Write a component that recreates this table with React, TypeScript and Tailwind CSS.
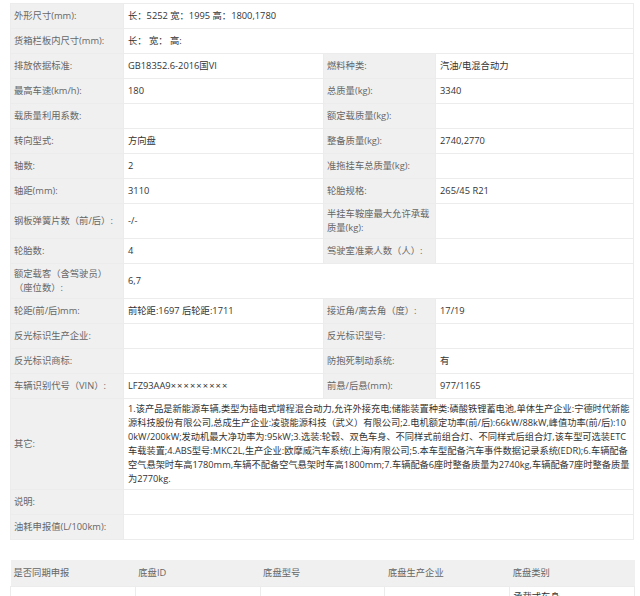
import React from "react";

type Row = {
  l1: React.ReactNode;
  v1?: React.ReactNode;
  l2?: React.ReactNode;
  v2?: React.ReactNode;
  wide?: boolean;
};

const rows: Row[] = [
  { l1: "外形尺寸(mm):", v1: "长：5252 宽：1995 高：1800,1780", wide: true },
  { l1: "货箱栏板内尺寸(mm):", v1: "长： 宽： 高:", wide: true },
  { l1: "排放依据标准:", v1: "GB18352.6-2016国VI", l2: "燃料种类:", v2: "汽油/电混合动力" },
  { l1: "最高车速(km/h):", v1: "180", l2: "总质量(kg):", v2: "3340" },
  { l1: "载质量利用系数:", v1: "", l2: "额定载质量(kg):", v2: "" },
  { l1: "转向型式:", v1: "方向盘", l2: "整备质量(kg):", v2: "2740,2770" },
  { l1: "轴数:", v1: "2", l2: "准拖挂车总质量(kg):", v2: "" },
  { l1: "轴距(mm):", v1: "3110", l2: "轮胎规格:", v2: "265/45 R21" },
  {
    l1: "钢板弹簧片数（前/后）:",
    v1: "-/-",
    l2: (
      <>
        半挂车鞍座最大允许承载
        <br />
        质量(kg):
      </>
    ),
    v2: "",
  },
  { l1: "轮胎数:", v1: "4", l2: "驾驶室准乘人数（人）:", v2: "" },
  {
    l1: (
      <>
        额定载客（含驾驶员）
        <br />
        （座位数）:
      </>
    ),
    v1: "6,7",
    wide: true,
  },
  { l1: "轮距(前/后)mm:", v1: "前轮距:1697 后轮距:1711", l2: "接近角/离去角（度）:", v2: "17/19" },
  { l1: "反光标识生产企业:", v1: "", l2: "反光标识型号:", v2: "" },
  { l1: "反光标识商标:", v1: "", l2: "防抱死制动系统:", v2: "有" },
  {
    l1: "车辆识别代号（VIN）:",
    v1: (
      <>
        LFZ93AA9<span className="tracking-[1.1px]">×××××××××</span>
      </>
    ),
    l2: "前悬/后悬(mm):",
    v2: "977/1165",
  },
];

const otherLines = [
  "1.该产品是新能源车辆,类型为插电式增程混合动力,允许外接充电;储能装置种类:磷酸铁锂蓄电池,单体生产企业:宁德时代新能",
  "源科技股份有限公司,总成生产企业:凌骁能源科技（武义）有限公司;2.电机额定功率(前/后):66kW/88kW,峰值功率(前/后):10",
  "0kW/200kW;发动机最大净功率为:95kW;3.选装:轮毂、双色车身、不同样式前组合灯、不同样式后组合灯,该车型可选装ETC",
  "车载装置;4.ABS型号:MKC2L,生产企业:欧摩威汽车系统(上海)有限公司;5.本车型配备汽车事件数据记录系统(EDR);6.车辆配备",
  "空气悬架时车高1780mm,车辆不配备空气悬架时车高1800mm;7.车辆配备6座时整备质量为2740kg,车辆配备7座时整备质量",
  "为2770kg.",
];

const label = "h-[25px] border border-[#ececec] bg-[#f0f0f0] px-[3px] py-[3px] text-[#666] align-middle";
const value = "h-[25px] border border-[#ececec] bg-white px-[4px] py-[3px] text-[#333] align-middle";

const chassisHead = ["是否同期申报", "底盘ID", "底盘型号", "底盘生产企业", "底盘类别"];

export default function App() {
  return (
    <div
      className="w-[640px] h-[596px] overflow-hidden bg-white text-[9.3px] leading-[14px]"
      style={{ fontFamily: '"Open Sans", "Noto Sans CJK SC", sans-serif' }}
    >
      <table className="ml-[10px] mt-[3px] w-[623px] table-fixed border-collapse">
        <colgroup>
          <col className="w-[113px]" />
          <col className="w-[200px]" />
          <col className="w-[112px]" />
          <col className="w-[198px]" />
        </colgroup>
        <tbody>
          {rows.map((r, i) => (
            <tr key={i}>
              <td className={label}>{r.l1}</td>
              {r.wide ? (
                <td className={value} colSpan={3}>
                  {r.v1}
                </td>
              ) : (
                <>
                  <td className={value}>{r.v1}</td>
                  <td className={label}>{r.l2}</td>
                  <td className={value}>{r.v2}</td>
                </>
              )}
            </tr>
          ))}
          <tr>
            <td className={label}>其它:</td>
            <td className={value + " text-[9.22px]"} colSpan={3}>
              {otherLines.map((line, i) => (
                <span key={i} className="block whitespace-nowrap">
                  {line}
                </span>
              ))}
            </td>
          </tr>
          <tr>
            <td className={label}>说明:</td>
            <td className={value} colSpan={3}></td>
          </tr>
          <tr>
            <td className={label}>油耗申报值(L/100km):</td>
            <td className={value} colSpan={3}></td>
          </tr>
        </tbody>
      </table>

      <table className="ml-[10px] mt-[20px] w-[625px] table-fixed border-collapse">
        <thead>
          <tr>
            {chassisHead.map((h) => (
              <th key={h} className="h-[26px] bg-[#f0f0f0] px-[3px] text-left font-normal text-[#666]">
                {h}
              </th>
            ))}
          </tr>
        </thead>
        <tbody>
          <tr>
            <td className="h-[40px] border border-[#ececec] px-[3px]"></td>
            <td className="border border-[#ececec] px-[3px]"></td>
            <td className="border border-[#ececec] px-[3px]"></td>
            <td className="border border-[#ececec] px-[3px]"></td>
            <td className="border border-[#ececec] px-[3px] pt-[3px] align-top text-[#333]">承载式车身</td>
          </tr>
        </tbody>
      </table>
    </div>
  );
}
